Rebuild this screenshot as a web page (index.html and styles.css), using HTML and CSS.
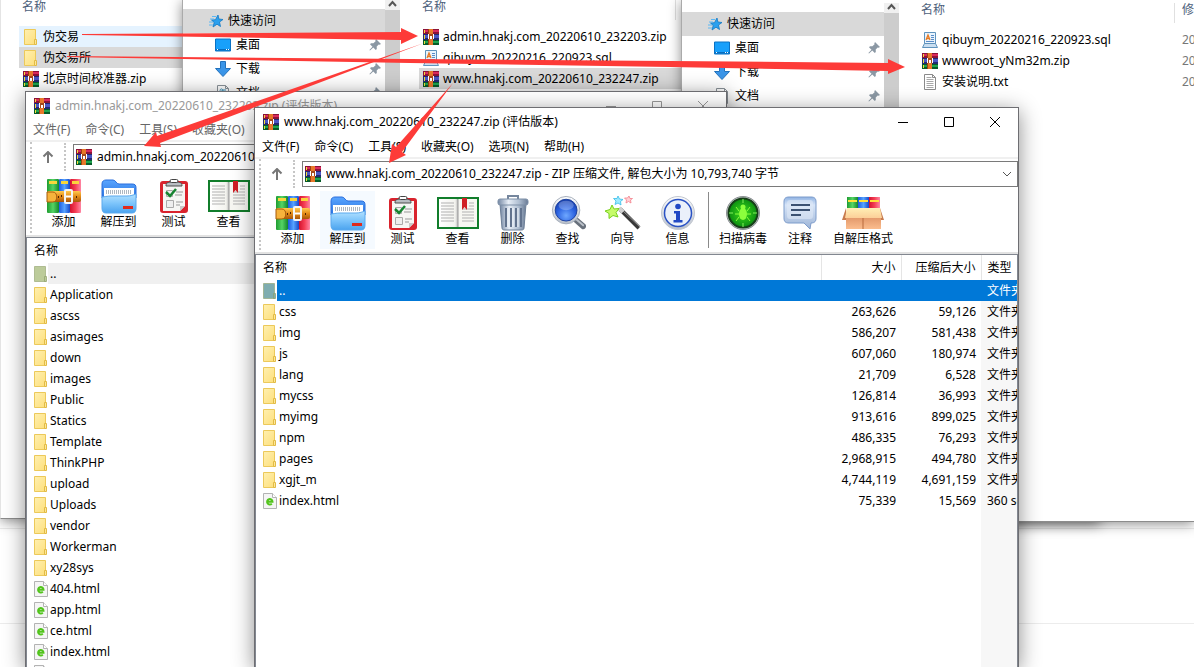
FILE: index.html
```html
<!DOCTYPE html>
<html lang="zh-CN">
<head>
<meta charset="utf-8">
<title>文件</title>
<link rel="stylesheet" href="styles.css">
</head>
<body>
<svg class="defs" aria-hidden="true">
  <defs>
    <linearGradient id="gFolder" x1="0" y1="0" x2="1" y2="1"><stop offset="0" stop-color="#fff0b0"/><stop offset="1" stop-color="#fddf7c"/></linearGradient>
    <linearGradient id="gGreen"><stop offset="0" stop-color="#1f9c30"/><stop offset=".5" stop-color="#55d465"/><stop offset="1" stop-color="#12862a"/></linearGradient>
    <linearGradient id="gBlue"><stop offset="0" stop-color="#1d5be0"/><stop offset=".5" stop-color="#56a3ff"/><stop offset="1" stop-color="#1848c8"/></linearGradient>
    <linearGradient id="gRed"><stop offset="0" stop-color="#d3122e"/><stop offset=".5" stop-color="#f43f55"/><stop offset="1" stop-color="#ff86a4"/></linearGradient>
    <linearGradient id="gBelt" x1="0" y1="0" x2="0" y2="1"><stop offset="0" stop-color="#ffc94d"/><stop offset=".5" stop-color="#e38a18"/><stop offset="1" stop-color="#a85608"/></linearGradient>
    <linearGradient id="gBack" x1="0" y1="0" x2="0" y2="1"><stop offset="0" stop-color="#5aa6ff"/><stop offset="1" stop-color="#2a72e0"/></linearGradient>
    <linearGradient id="gFront" x1="0" y1="0" x2="0" y2="1"><stop offset="0" stop-color="#b4e2ff"/><stop offset=".5" stop-color="#7cc4fb"/><stop offset="1" stop-color="#4ba3ee"/></linearGradient>
    <linearGradient id="gPage"><stop offset="0" stop-color="#fff"/><stop offset=".85" stop-color="#f3f3ee"/><stop offset="1" stop-color="#bbb"/></linearGradient>
    <linearGradient id="gBin"><stop offset="0" stop-color="#7487a3"/><stop offset=".35" stop-color="#e6edf6"/><stop offset=".7" stop-color="#b0bfd2"/><stop offset="1" stop-color="#6a7b95"/></linearGradient>
    <radialGradient id="gLens" cx=".5" cy=".75" r=".7"><stop offset="0" stop-color="#6fa8ff"/><stop offset=".6" stop-color="#2b62e0"/><stop offset="1" stop-color="#163fae"/></radialGradient>
    <linearGradient id="gSteel" x1="0" y1="0" x2="0" y2="1"><stop offset="0" stop-color="#fbfcfe"/><stop offset="1" stop-color="#b8bfca"/></linearGradient>
    <radialGradient id="gVirus"><stop offset="0" stop-color="#3fdc1e"/><stop offset="1" stop-color="#0a8d10"/></radialGradient>
    <linearGradient id="gNote" x1="0" y1="0" x2="0" y2="1"><stop offset="0" stop-color="#8fb2e2"/><stop offset=".25" stop-color="#d7e5f8"/><stop offset="1" stop-color="#9db4d6"/></linearGradient>
    <linearGradient id="gBox" x1="0" y1="0" x2="0" y2="1"><stop offset="0" stop-color="#d98a5c"/><stop offset="1" stop-color="#fbbd8e"/></linearGradient>
    <linearGradient id="gFlap" x1="0" y1="0" x2="0" y2="1"><stop offset="0" stop-color="#ffefb5"/><stop offset="1" stop-color="#fccf98"/></linearGradient>
  </defs>

  <symbol id="rar" viewBox="0 0 16 16">
    <path d="M0 0h16v5H0z" fill="#8c1238"/><path d="M1 1h15v2H1z" fill="#d92a5c"/>
    <path d="M0 5h16v6H0z" fill="#232a72"/><path d="M1 6h15v3H1z" fill="#4b56c4"/>
    <path d="M0 11h16v5H0z" fill="#075c28"/><path d="M1 12h15v2H1z" fill="#1ea44e"/>
    <path d="M1 1h1v3H1zM1 6h1v4H1zM1 12h1v3H1z" fill="#f5df3a"/>
    <path d="M6 0h4v16H6z" fill="#e8772a"/><path d="M5 0h1v16H5z" fill="#9b4210"/>
    <path d="M5 5h6v5H5z" fill="#a3481c"/><path d="M5 5h1v5H5zM10 5h1v5h-1zM7 7h2v1H7zM7 8h1v2H7zM8 8h1v2H8z" fill="#fff"/>
  </symbol>
  <symbol id="folder" viewBox="0 0 14 16">
    <path d="M.5.5h11v15H.5z" fill="url(#gFolder)" stroke="#ecc95a"/>
    <path d="M10.500 10.500h2v5h-2z" fill="#fde79a" stroke="#e2bb45"/>
  </symbol>
  <symbol id="updir" viewBox="0 0 14 16">
    <path d="M.5.5h11v15H.5z" fill="currentColor" stroke="#8fa06a" stroke-opacity=".6"/>
    <path d="M10.500 10.500h2v5h-2z" fill="currentColor" stroke="#8fa06a" stroke-opacity=".7"/>
  </symbol>
  <symbol id="html" viewBox="0 0 14 16">
    <path d="M.5.5h9l4 4v11H.5z" fill="#f5f5f5" stroke="#b3b3b3"/><path d="M9.500.5v4h4" fill="#fff" stroke="#b3b3b3"/>
    <path d="M4 8.700h5.500A2.700 2.700 0 1 0 8.800 10.600" fill="none" stroke="#52c41c" stroke-width="2"/>
  </symbol>
  <symbol id="sql" viewBox="0 0 16 16">
    <path d="M2.500.5h11v11h-11z" fill="#e9f4fd" stroke="#5f93bd"/><path d="M2.500 11.500h11l2 4H.500z" fill="#c9def0" stroke="#5f93bd"/>
    <path d="M4 8l2-5 2 5M5 6.500h2" fill="none" stroke="#e87b24" stroke-width="1.300"/><path d="M9 3.500h3M9 5.500h3M9 7.500h3M4 9.500h8" stroke="#5a8cc8"/>
  </symbol>
  <symbol id="txt" viewBox="0 0 16 16">
    <path d="M2.500.5h8l3 3v12h-11z" fill="#fff" stroke="#8a8a8a"/><path d="M10.500.5v3h3" fill="none" stroke="#8a8a8a"/>
    <path d="M4.500 3.500h5M4.500 5.500h7M4.500 7.500h7M4.500 9.500h7M4.500 11.500h7M4.500 13.500h7" stroke="#a8a8a8"/>
  </symbol>
  <symbol id="star" viewBox="0 0 16 16">
    <path d="M10 2l.9 4 4.100.5-3.500 2.500 1 4.500L9 11.200 5 14l1.200-4.500L3.500 7l4-.3z" fill="#2ba0ee" stroke="#1279c4" stroke-width=".8"/>
    <path d="M4 3.500h4M2 6h4M1 9h4M1 12h4" stroke="#5cb8f4"/>
  </symbol>
  <symbol id="desktop" viewBox="0 0 16 13">
    <path d="M.5.5h15v12H.5z" fill="#18a0fb" stroke="#0a72c4"/><path d="M1 10.500h14v1.500H1z" fill="#0a6dbd"/><path d="M2 11h1M11 11h1M13 11h1" stroke="#fff"/>
  </symbol>
  <symbol id="download" viewBox="0 0 16 16"><path d="M5.500.5h5v7h5L8 15.500.5 7.500h5z" fill="#3a95e8" stroke="#2272bd"/></symbol>
  <symbol id="doc" viewBox="0 0 16 16">
    <path d="M2.500.5h8l3 3v12h-11z" fill="#fff" stroke="#8a9299"/><path d="M10.500.5v3h3" fill="none" stroke="#8a9299"/><path d="M5 7c0-5 3-3 3-1M7 9V5h4M5 9.500h6M5 12.500h6" fill="none" stroke="#3f94bd"/>
  </symbol>
  <symbol id="pin" viewBox="0 0 12 12"><path d="M7 0l5 5-1.500.7-.8-.3-2 2.200.1 2.400-1 1L4.300 8.500 1 11.600.4 11l3.100-3.300L1 5.200l1-1 2.400.1 2.200-2-.3-.8z" fill="#8b98a4"/></symbol>

  <symbol id="t-add" viewBox="0 0 36 36">
    <rect x="1" y="1" width="12" height="34" rx="1" fill="url(#gGreen)"/><rect x="13" y="1" width="11" height="34" rx="1" fill="url(#gBlue)"/><rect x="24" y="1" width="11" height="34" rx="1" fill="url(#gRed)"/>
    <path d="M3 3h8v3H3zM15 3h7v3h-7zM26 3h7v3h-7z" fill="#f9d63c"/>
    <rect x="1" y="13" width="34" height="11" rx="2" fill="url(#gBelt)"/><path d="M1 14h6c5 0 5 10 0 10H1z" fill="#f6b33c" stroke="#a65a0a"/>
    <rect x="19" y="12" width="7" height="13" rx="1" fill="none" stroke="#f4f4f4" stroke-width="2"/><path d="M20 18.500h5" stroke="#fff" stroke-width="2"/><path d="M15 17h1v2h-1zM30 18h1v2h-1zM12 18h1v2h-1z" fill="#4d2503"/>
  </symbol>
  <symbol id="t-extract" viewBox="0 0 36 36">
    <path d="M1 6c0-3 2-4 4-4h7c3 0 3 4 6 4h13c3 0 4 1 4 4v10H1z" fill="url(#gBack)" stroke="#2a6fdc"/>
    <path d="M3 10h30v12H3z" fill="#fff"/><path d="M5 14h26" stroke="#aeb6bf" stroke-width="4" stroke-dasharray="1 1"/>
    <path d="M1 19c2 0 5-1 9-1h16c4 0 6-1 9-2v14c0 3-1 5-4 5H5c-3 0-4-2-4-5z" fill="url(#gFront)" stroke="#5aa9ee"/><path d="M22 28h10v3H22z" fill="#e02a1c"/>
  </symbol>
  <symbol id="t-test" viewBox="0 0 36 36">
    <rect x="4" y="3" width="28" height="32" rx="3" fill="#d9232d"/><path d="M7 6h22v22l-5 5H7z" fill="#f6f6f4"/><path d="M29 28l-5 5v-5z" fill="#c9c9c9"/>
    <path d="M10 8c0-4 2-3 4-4h8c2 1 4 0 4 4z" fill="#b9bdc2" stroke="#4d4d4d"/><rect x="14" y="1.500" width="8" height="3" rx="1.500" fill="#fff" stroke="#444"/>
    <path d="M10.500 12.500h6v6h-6zM10.500 22.500h7v7h-7z" fill="#eee" stroke="#aaa"/><path d="M10 14l4 4 6-7" fill="none" stroke="#178431" stroke-width="2.500"/><path d="M20 14h7M19 17h7M20 24h7M20 27h4" stroke="#999"/>
  </symbol>
  <symbol id="t-view" viewBox="0 0 44 36">
    <path d="M1 2h42v32H1z" fill="#117d2b"/><path d="M3 4h18c1 0 1 1 1 1v27H3z" fill="url(#gPage)"/><path d="M41 4H23c-1 0-1 1-1 1v27h19z" fill="#f7f7f2"/>
    <path d="M5 8h13M5 11h13M5 14h13M5 17h13M5 20h13M5 23h13M5 26h13M26 14h12M26 17h12M26 20h12M26 23h12M26 26h12M33 8h5M33 11h5" stroke="#b1b1b1"/><path d="M22 5v27" stroke="#999"/><path d="M26 3h5v12l-2.500-3-2.500 3z" fill="#d01f25"/>
  </symbol>
  <symbol id="t-delete" viewBox="0 0 36 36">
    <path d="M13 4V1h10v3" fill="none" stroke="#75869d" stroke-width="2"/><path d="M5 9h26l-2 24c0 2-2 2-3 2H10c-1 0-3 0-3-2z" fill="url(#gBin)" stroke="#6d7f97"/>
    <path d="M11 13v19M16 13v19M21 13v19M26 13v19" stroke="#62738e" stroke-width="2"/><path d="M13 13v19M18 13v19M23 13v19" stroke="#f2f6fb"/><rect x="3" y="4" width="30" height="6" rx="2" fill="url(#gBin)" stroke="#7d8fa7"/>
  </symbol>
  <symbol id="t-find" viewBox="0 0 38 36">
    <path d="M27 25l8 7" stroke="#69717c" stroke-width="6" stroke-linecap="round"/><path d="M27 24l8 7" stroke="#bac0c8" stroke-width="2" stroke-linecap="round"/>
    <circle cx="17" cy="15" r="14.500" fill="url(#gSteel)" stroke="#a5adba"/><circle cx="17" cy="15" r="11.500" fill="url(#gLens)" stroke="#1a3f9e"/><ellipse cx="17" cy="10" rx="8" ry="5" fill="#fff" opacity=".25"/>
  </symbol>
  <symbol id="t-wizard" viewBox="0 0 36 36">
    <path d="M15 14l19 19" stroke="#383838" stroke-width="4"/><path d="M15 13l20 19" stroke="#999" stroke-width="1"/><path d="M14 13l4 4" stroke="#cfcfcf" stroke-width="4"/>
    <path d="M7 10l2 4 5-.5-3 4 2 4.500-5-1.500-4 3v-5l-4-2.500 5-1.500z" fill="#c6fb6a" stroke="#78d11e"/><path d="M13 1l1.500 3 3.500.5-2.500 2 .5 3.500-3-2-3 1.500 1-3.500L8.500 3.500h3.500z" fill="#9deaff" stroke="#37bde8" stroke-width=".8"/><path d="M24 1l1 2.500h2.500L25.500 5l.5 3-2.500-1.500L21 8l.5-3-2-2h3z" fill="#ffd0d4" stroke="#f3808c" stroke-width=".8"/>
  </symbol>
  <symbol id="t-info" viewBox="0 0 36 36">
    <circle cx="18" cy="18" r="16.500" fill="url(#gSteel)" stroke="#c2c7d0"/><circle cx="18" cy="18" r="13.500" fill="#eaf0fa" stroke="#2951c4" stroke-width="1.500"/><circle cx="18" cy="11.500" r="2.800" fill="#2148c4"/><path d="M14 16h6v9h2.500v2.500h-9V25H16v-6.500h-2z" fill="#2148c4"/>
  </symbol>
  <symbol id="t-virus" viewBox="0 0 36 36">
    <circle cx="18" cy="18" r="16.500" fill="#c5c9cc" stroke="#8b8f93"/><circle cx="18" cy="18" r="14.500" fill="url(#gVirus)" stroke="#163f18" stroke-width="2"/>
    <path d="M18 4v4M18 28v4M4 18h4M28 18h4" stroke="#86f05c"/><ellipse cx="18" cy="19" rx="4" ry="6" fill="#8cff3c"/><circle cx="18" cy="12" r="2.500" fill="#8cff3c"/><path d="M14 16l-3-4M22 16l3-4M14 19h-4M22 19h4M14 22l-3 4M22 22l3 4" stroke="#8cff3c"/>
  </symbol>
  <symbol id="t-note" viewBox="0 0 36 36">
    <path d="M7 2h22c4 0 5 2 5 5v16c0 3-1 5-5 5l-1 6-6-6H7c-4 0-5-2-5-5V7c0-3 1-5 5-5z" fill="url(#gNote)" stroke="#7d9ccb"/><rect x="5" y="5" width="26" height="19" rx="3" fill="#dfe9f7" opacity=".6"/>
    <path d="M9 10h19M9 15h19M9 20h10" stroke="#3c5272" stroke-width="2"/>
  </symbol>
  <symbol id="t-sfx" viewBox="0 0 42 36">
    <path d="M5 2h11v14H5z" fill="url(#gGreen)"/><path d="M16 2h11v14H16z" fill="url(#gBlue)"/><path d="M27 2h11v14H27z" fill="url(#gRed)"/><path d="M6 5h9v2H6zM17 5h9v2h-9zM28 5h9v2h-9z" fill="#ffe03a"/>
    <path d="M4 13L0 25h5zM38 13l4 12h-5z" fill="#c77b4e"/><path d="M4 18h35v16H4z" fill="url(#gBox)"/><path d="M21 22v12" stroke="#b86a3d"/><path d="M5 13h33l2 10H3z" fill="url(#gFlap)"/>
  </symbol>
</svg>

<main class="desktop">
  <section class="explorer explorer-one">
    <div class="files">
      <div class="files-head">名称</div>
      <div class="entry hover"><svg class="i14"><use href="#folder"/></svg>伪交易</div>
      <div class="entry chosen"><svg class="i14"><use href="#folder"/></svg>伪交易所</div>
      <div class="entry"><svg class="i16"><use href="#rar"/></svg>北京时间校准器.zip</div>
    </div>
  </section>

  <section class="explorer explorer-two">
    <nav class="places">
      <a class="place top" href="#"><svg class="i16"><use href="#star"/></svg>快速访问</a>
      <a class="place" href="#"><svg class="i16"><use href="#desktop"/></svg>桌面<svg class="pin"><use href="#pin"/></svg></a>
      <a class="place" href="#"><svg class="i16"><use href="#download"/></svg>下载<svg class="pin"><use href="#pin"/></svg></a>
      <a class="place" href="#"><svg class="i16"><use href="#doc"/></svg>文档<svg class="pin"><use href="#pin"/></svg></a>
    </nav>
    <div class="scrollbar"><svg viewBox="0 0 15 10"><path d="M4 6l3.500-4L11 6" fill="none" stroke="#555" stroke-width="2"/></svg></div>
    <div class="files">
      <div class="files-head"><span class="head-name">名称</span></div>
      <div class="entry"><svg class="i16"><use href="#rar"/></svg>admin.hnakj.com_20220610_232203.zip</div>
      <div class="entry"><svg class="i16"><use href="#sql"/></svg>qibuym_20220216_220923.sql</div>
      <div class="entry chosen"><svg class="i16"><use href="#rar"/></svg>www.hnakj.com_20220610_232247.zip</div>
    </div>
  </section>

  <section class="explorer explorer-three">
    <nav class="places">
      <a class="place top" href="#"><svg class="i16"><use href="#star"/></svg>快速访问</a>
      <a class="place" href="#"><svg class="i16"><use href="#desktop"/></svg>桌面<svg class="pin"><use href="#pin"/></svg></a>
      <a class="place" href="#"><svg class="i16"><use href="#download"/></svg>下载<svg class="pin"><use href="#pin"/></svg></a>
      <a class="place" href="#"><svg class="i16"><use href="#doc"/></svg>文档<svg class="pin"><use href="#pin"/></svg></a>
    </nav>
    <div class="scrollbar"><svg viewBox="0 0 15 10"><path d="M4 6l3.500-4L11 6" fill="none" stroke="#555" stroke-width="2"/></svg></div>
    <div class="files">
      <div class="files-head"><span class="head-name">名称</span><span class="head-date">修</span></div>
      <div class="entry"><svg class="i16"><use href="#sql"/></svg>qibuym_20220216_220923.sql<span class="date">20</span></div>
      <div class="entry"><svg class="i16"><use href="#rar"/></svg>wwwroot_yNm32m.zip<span class="date">20</span></div>
      <div class="entry"><svg class="i16"><use href="#txt"/></svg>安装说明.txt<span class="date">20</span></div>
    </div>
  </section>

  <section class="archive archive-back">
    <header class="titlebar">
      <svg class="i16"><use href="#rar"/></svg><h1>admin.hnakj.com_20220610_232203.zip (评估版本)</h1>
      <button class="ctl" aria-label="最小化"><svg viewBox="0 0 12 12"><path d="M1 6.500h10"/></svg></button>
      <button class="ctl" aria-label="最大化"><svg viewBox="0 0 12 12"><path d="M1.500 1.500h9v9h-9z"/></svg></button>
      <button class="ctl" aria-label="关闭"><svg viewBox="0 0 12 12"><path d="M1 1l10 10M11 1L1 11"/></svg></button>
    </header>
    <div class="menubar"><button>文件(F)</button><button>命令(C)</button><button>工具(S)</button><button>收藏夹(O)</button></div>
    <div class="bars">
      <div class="address">
        <button class="up" aria-label="向上"><svg viewBox="0 0 12 12"><path d="M6 12V1M1.500 5.500L6 1l4.500 4.500"/></svg></button>
        <label class="combo"><svg class="i16"><use href="#rar"/></svg><select aria-label="路径"><option>admin.hnakj.com_20220610_232203.zip</option></select></label>
      </div>
      <div class="tools">
        <button class="tool"><svg><use href="#t-add"/></svg>添加</button>
        <button class="tool"><svg><use href="#t-extract"/></svg>解压到</button>
        <button class="tool"><svg><use href="#t-test"/></svg>测试</button>
        <button class="tool wide"><svg><use href="#t-view"/></svg>查看</button>
      </div>
    </div>
    <div class="listing">
      <table>
        <thead><tr><th class="name">名称</th></tr></thead>
        <tbody>
          <tr class="current"><td><span class="file"><svg class="i14"><use href="#updir"/></svg><span class="label">..</span></span></td></tr>
          <tr><td><span class="file"><svg class="i14"><use href="#folder"/></svg><span class="label">Application</span></span></td></tr>
          <tr><td><span class="file"><svg class="i14"><use href="#folder"/></svg><span class="label">ascss</span></span></td></tr>
          <tr><td><span class="file"><svg class="i14"><use href="#folder"/></svg><span class="label">asimages</span></span></td></tr>
          <tr><td><span class="file"><svg class="i14"><use href="#folder"/></svg><span class="label">down</span></span></td></tr>
          <tr><td><span class="file"><svg class="i14"><use href="#folder"/></svg><span class="label">images</span></span></td></tr>
          <tr><td><span class="file"><svg class="i14"><use href="#folder"/></svg><span class="label">Public</span></span></td></tr>
          <tr><td><span class="file"><svg class="i14"><use href="#folder"/></svg><span class="label">Statics</span></span></td></tr>
          <tr><td><span class="file"><svg class="i14"><use href="#folder"/></svg><span class="label">Template</span></span></td></tr>
          <tr><td><span class="file"><svg class="i14"><use href="#folder"/></svg><span class="label">ThinkPHP</span></span></td></tr>
          <tr><td><span class="file"><svg class="i14"><use href="#folder"/></svg><span class="label">upload</span></span></td></tr>
          <tr><td><span class="file"><svg class="i14"><use href="#folder"/></svg><span class="label">Uploads</span></span></td></tr>
          <tr><td><span class="file"><svg class="i14"><use href="#folder"/></svg><span class="label">vendor</span></span></td></tr>
          <tr><td><span class="file"><svg class="i14"><use href="#folder"/></svg><span class="label">Workerman</span></span></td></tr>
          <tr><td><span class="file"><svg class="i14"><use href="#folder"/></svg><span class="label">xy28sys</span></span></td></tr>
          <tr><td><span class="file"><svg class="i14"><use href="#html"/></svg><span class="label">404.html</span></span></td></tr>
          <tr><td><span class="file"><svg class="i14"><use href="#html"/></svg><span class="label">app.html</span></span></td></tr>
          <tr><td><span class="file"><svg class="i14"><use href="#html"/></svg><span class="label">ce.html</span></span></td></tr>
          <tr><td><span class="file"><svg class="i14"><use href="#html"/></svg><span class="label">index.html</span></span></td></tr>
          <tr><td><span class="file"><svg class="i14"><use href="#html"/></svg></span></td></tr>
        </tbody>
      </table>
    </div>
  </section>

  <section class="archive archive-front">
    <header class="titlebar">
      <svg class="i16"><use href="#rar"/></svg><h1>www.hnakj.com_20220610_232247.zip (评估版本)</h1>
      <button class="ctl" aria-label="最小化"><svg viewBox="0 0 12 12"><path d="M1 6.500h10"/></svg></button>
      <button class="ctl" aria-label="最大化"><svg viewBox="0 0 12 12"><path d="M1.500 1.500h9v9h-9z"/></svg></button>
      <button class="ctl" aria-label="关闭"><svg viewBox="0 0 12 12"><path d="M1 1l10 10M11 1L1 11"/></svg></button>
    </header>
    <div class="menubar"><button>文件(F)</button><button>命令(C)</button><button>工具(S)</button><button>收藏夹(O)</button><button>选项(N)</button><button>帮助(H)</button></div>
    <div class="bars">
      <div class="address">
        <button class="up" aria-label="向上"><svg viewBox="0 0 12 12"><path d="M6 12V1M1.500 5.500L6 1l4.500 4.500"/></svg></button>
        <label class="combo"><svg class="i16"><use href="#rar"/></svg><select aria-label="路径"><option>www.hnakj.com_20220610_232247.zip - ZIP 压缩文件, 解包大小为 10,793,740 字节</option></select><svg class="chevron" viewBox="0 0 10 6"><path d="M1 1l4 4 4-4" fill="none" stroke="#555"/></svg></label>
      </div>
      <div class="tools">
        <button class="tool"><svg><use href="#t-add"/></svg>添加</button>
        <button class="tool hot"><svg><use href="#t-extract"/></svg>解压到</button>
        <button class="tool"><svg><use href="#t-test"/></svg>测试</button>
        <button class="tool wide"><svg><use href="#t-view"/></svg>查看</button>
        <button class="tool"><svg><use href="#t-delete"/></svg>删除</button>
        <button class="tool"><svg><use href="#t-find"/></svg>查找</button>
        <button class="tool"><svg><use href="#t-wizard"/></svg>向导</button>
        <button class="tool"><svg><use href="#t-info"/></svg>信息</button>
        <span class="divider"></span>
        <button class="tool long"><svg><use href="#t-virus"/></svg>扫描病毒</button>
        <button class="tool short"><svg><use href="#t-note"/></svg>注释</button>
        <button class="tool longest wide"><svg><use href="#t-sfx"/></svg>自解压格式</button>
      </div>
    </div>
    <div class="listing typed">
      <table>
        <thead><tr><th class="name">名称</th><th class="num">大小</th><th class="num">压缩后大小</th><th class="type">类型</th></tr></thead>
        <tbody>
          <tr class="current"><td><span class="file"><svg class="i14"><use href="#updir"/></svg><span class="label">..</span></span></td><td class="num"></td><td class="num"></td><td class="type">文件夹</td></tr>
          <tr><td><span class="file"><svg class="i14"><use href="#folder"/></svg><span class="label">css</span></span></td><td class="num">263,626</td><td class="num">59,126</td><td class="type">文件夹</td></tr>
          <tr><td><span class="file"><svg class="i14"><use href="#folder"/></svg><span class="label">img</span></span></td><td class="num">586,207</td><td class="num">581,438</td><td class="type">文件夹</td></tr>
          <tr><td><span class="file"><svg class="i14"><use href="#folder"/></svg><span class="label">js</span></span></td><td class="num">607,060</td><td class="num">180,974</td><td class="type">文件夹</td></tr>
          <tr><td><span class="file"><svg class="i14"><use href="#folder"/></svg><span class="label">lang</span></span></td><td class="num">21,709</td><td class="num">6,528</td><td class="type">文件夹</td></tr>
          <tr><td><span class="file"><svg class="i14"><use href="#folder"/></svg><span class="label">mycss</span></span></td><td class="num">126,814</td><td class="num">36,993</td><td class="type">文件夹</td></tr>
          <tr><td><span class="file"><svg class="i14"><use href="#folder"/></svg><span class="label">myimg</span></span></td><td class="num">913,616</td><td class="num">899,025</td><td class="type">文件夹</td></tr>
          <tr><td><span class="file"><svg class="i14"><use href="#folder"/></svg><span class="label">npm</span></span></td><td class="num">486,335</td><td class="num">76,293</td><td class="type">文件夹</td></tr>
          <tr><td><span class="file"><svg class="i14"><use href="#folder"/></svg><span class="label">pages</span></span></td><td class="num">2,968,915</td><td class="num">494,780</td><td class="type">文件夹</td></tr>
          <tr><td><span class="file"><svg class="i14"><use href="#folder"/></svg><span class="label">xgjt_m</span></span></td><td class="num">4,744,119</td><td class="num">4,691,159</td><td class="type">文件夹</td></tr>
          <tr><td><span class="file"><svg class="i14"><use href="#html"/></svg><span class="label">index.html</span></span></td><td class="num">75,339</td><td class="num">15,569</td><td class="type">360 se</td></tr>
        </tbody>
      </table>
    </div>
  </section>

  <svg class="arrows" viewBox="0 0 1194 667" aria-hidden="true">
    <path d="M82 34L401 32V28L418 36L401 44V40L82 35z"/>
    <path d="M67 56L410 59L670 61L888 63V59L905 67L888 74V71L670 67L410 63L67 57z"/>
    <path d="M424 43L160 143L161 147L144 146L156 132L157 136z"/>
    <path d="M453 83L402 152L406 155L389 163L392 144L396 147z"/>
  </svg>
</main>
</body>
</html>
```
FILE: styles.css
```css
* { box-sizing: border-box; }
body {
  margin: 0;
  font: 12px/16px "Noto Sans", "Noto Sans CJK SC", sans-serif;
  color: #000;
}
button, select {
  font: inherit;
  color: inherit;
  background: none;
  border: 0;
  padding: 0;
  margin: 0;
}
.defs { position: absolute; width: 0; height: 0; }
.i16 { width: 16px; height: 16px; flex: none; }
.i14 { width: 14px; height: 16px; flex: none; }

.desktop {
  position: relative;
  height: 100vh;
  overflow: hidden;
  background:
    linear-gradient(#ececec, #ececec) 0 528px / 100% 1px no-repeat,
    linear-gradient(#ececec, #ececec) 0 623px / 100% 1px no-repeat,
    #fff;
}

/* File explorer windows */
.explorer {
  position: absolute;
  top: 0;
  bottom: 145px;
  display: flex;
  overflow: hidden;
  background: #fff;
  border-bottom: 1px solid #8c8c8c;
  box-shadow: 0 2px 12px rgba(0, 0, 0, .45);
}
.explorer-one { left: 0; right: 900px; bottom: 148px; padding-left: 3px; border-left: 1px solid #e4e4e4; }
.explorer-two { left: 182px; right: 94px; border-left: 1px solid #aaa; }
.explorer-three { left: 681px; right: 0; padding-top: 3px; border-left: 1px solid #aaa; }

.places { width: 202px; flex: none; padding-top: 9px; }
.place {
  display: flex;
  align-items: center;
  gap: 5px;
  height: 24px;
  padding: 0 4px 0 32px;
  color: inherit;
  text-decoration: none;
}
.place.top { padding-left: 25px; gap: 4px; background: #d9d9d9; }
.pin { width: 12px; height: 12px; margin-left: auto; }
.scrollbar { width: 15px; flex: none; background: #cdcdcd; }
.scrollbar svg { display: block; width: 15px; height: 10px; background: #f0f0f0; }

.files { flex: 1; min-width: 0; padding-left: 19px; }
.explorer-one .files { padding-left: 15px; }
.files-head {
  display: flex;
  height: 26px;
  padding-left: 3px;
  line-height: 14px;
  color: #4c607a;
}
.head-name { width: 254px; height: 20px; border-right: 1px solid #e0e0e0; }
.head-date { padding-left: 7px; }
.entry {
  display: flex;
  align-items: center;
  gap: 4px;
  height: 21px;
  padding-left: 4px;
  white-space: nowrap;
}
.entry .i14 { margin: 0 1px; }
.hover { background: #e5f3ff; }
.chosen { background: #d9d9d9; }
.date { width: 12px; margin-left: auto; color: #777; }
.explorer-three .head-name { flex: 1; }
.explorer-three .head-date { width: 19px; overflow: hidden; }

/* Archive manager windows */
.archive {
  position: absolute;
  bottom: 0;
  display: flex;
  flex-direction: column;
  overflow: hidden;
  background: #fff;
  border: 1px solid #6e6e72;
  border-bottom: 0;
  box-shadow: 0 4px 20px rgba(0, 0, 0, .45);
}
.archive-back { left: 25px; right: 467px; top: 91px; }
.archive-front { left: 254px; right: 175px; top: 107px; }

.titlebar { display: flex; align-items: center; height: 28px; flex: none; padding-left: 8px; }
.titlebar h1 { flex: 1; margin: 0 0 0 5px; font-size: 12px; font-weight: 400; white-space: nowrap; }
.ctl { width: 46px; height: 28px; flex: none; }
.ctl svg { display: block; width: 12px; height: 12px; margin: 0 auto; fill: none; stroke: currentColor; }
.archive-back .titlebar { height: 27px; color: #999; }
.archive-back .menubar { color: #666; }

.menubar {
  display: flex;
  gap: 15px;
  height: 23px;
  flex: none;
  padding: 1px 7px 0;
  border-bottom: 2px solid #f0f0f0;
  white-space: nowrap;
}
.bars {
  flex: none;
  height: 95px;
  margin-left: 4px;
  padding-top: 1px;
  border-left: 2px dotted #c6c6c6;
}
.address { display: flex; height: 28px; }
.up { width: 34px; border-right: 2px dotted #c6c6c6; }
.up svg { display: block; width: 12px; height: 12px; margin: 0 auto; fill: none; stroke: #777; stroke-width: 2; }
.combo {
  display: flex;
  flex: 1;
  align-items: center;
  gap: 5px;
  height: 26px;
  margin: 1px 0 0 7px;
  padding: 0 5px 0 2px;
  border: 1px solid #7a7a7a;
}
.combo select { flex: 1; min-width: 0; appearance: none; }
.chevron { width: 10px; height: 6px; }

.tools { display: flex; padding: 3px 0 3px 4px; }
.tool {
  display: flex;
  flex-direction: column;
  align-items: center;
  width: 55px;
  height: 58px;
  flex: none;
  padding-top: 4px;
  white-space: nowrap;
}
.tool svg { width: 36px; height: 36px; }
.tool.wide svg { width: 44px; }
.tool.hot { background: #f5faff; }
.tool.long { width: 66px; }
.tool.short { width: 48px; }
.tool.longest { width: 78px; }
.divider { width: 1px; height: 56px; margin: 1px 1px 0 3px; background: #8a8a8a; }

.listing {
  flex: 1;
  min-height: 0;
  overflow: hidden;
  border: 1px solid #828790;
  border-bottom: 0;
  outline: 2px solid #e2e2e2;
}
.typed { background: linear-gradient(#f7f7f7, #f7f7f7) right / 36px 100% no-repeat; }
table { width: 100%; border-collapse: collapse; table-layout: fixed; }
th, td { height: 21px; padding: 0; overflow: hidden; font-weight: 400; text-align: left; white-space: nowrap; }
th { height: 25px; background: #fff; border-left: 1px solid #e5e5e5; }
th.name { padding-left: 7px; border-left: 0; }
.num { width: 80px; padding-right: 5px; text-align: right; }
.type { width: 36px; padding-left: 6px; }
.file { display: flex; align-items: center; height: 21px; padding-left: 7px; }
.label { flex: 1; padding-left: 2px; line-height: 21px; }
.current .label { background: #f0f0f0; }
.current .i14 { color: #bccb9a; }
.archive-front .current .label,
.archive-front .current .num,
.archive-front .current .type { background: #0078d7; color: #fff; }
.archive-front .current .i14 { color: #7fadb0; }

.arrows {
  position: absolute;
  left: 0;
  top: 0;
  width: 1194px;
  height: 667px;
  fill: #fd3b38;
  pointer-events: none;
}
```
